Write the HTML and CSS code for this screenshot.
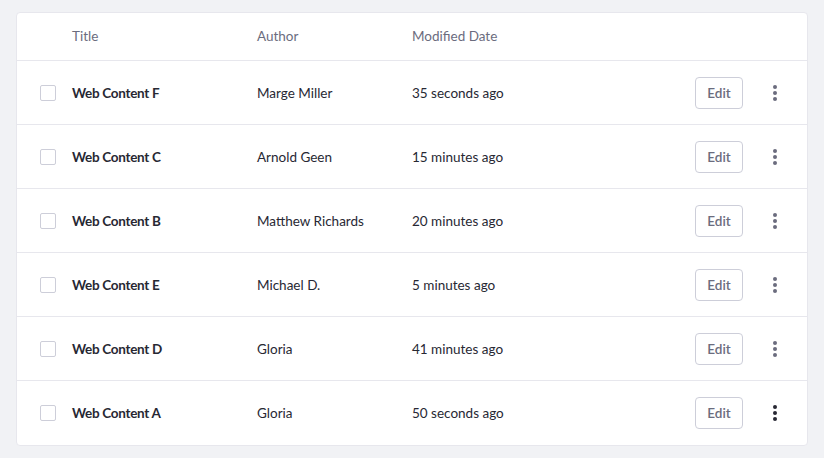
FILE: index.html
```html
<!DOCTYPE html>
<html lang="en">
<head>
<meta charset="utf-8">
<title>Web Content</title>
<link rel="stylesheet" href="styles.css">
</head>
<body>
<div class="card">
  <div class="row head">
    <span></span>
    <span>Title</span>
    <span>Author</span>
    <span>Modified Date</span>
    <span></span>
    <span></span>
  </div>
  <div class="row">
    <span class="check"></span>
    <span class="title">Web Content F</span>
    <span>Marge Miller</span>
    <span>35 seconds ago</span>
    <button class="edit">Edit</button>
    <button class="kebab"><svg width="4" height="16" viewBox="0 0 4 16"><circle cx="2" cy="2" r="2"/><circle cx="2" cy="8" r="2"/><circle cx="2" cy="14" r="2"/></svg></button>
  </div>
  <div class="row">
    <span class="check"></span>
    <span class="title">Web Content C</span>
    <span>Arnold Geen</span>
    <span>15 minutes ago</span>
    <button class="edit">Edit</button>
    <button class="kebab"><svg width="4" height="16" viewBox="0 0 4 16"><circle cx="2" cy="2" r="2"/><circle cx="2" cy="8" r="2"/><circle cx="2" cy="14" r="2"/></svg></button>
  </div>
  <div class="row">
    <span class="check"></span>
    <span class="title">Web Content B</span>
    <span>Matthew Richards</span>
    <span>20 minutes ago</span>
    <button class="edit">Edit</button>
    <button class="kebab"><svg width="4" height="16" viewBox="0 0 4 16"><circle cx="2" cy="2" r="2"/><circle cx="2" cy="8" r="2"/><circle cx="2" cy="14" r="2"/></svg></button>
  </div>
  <div class="row">
    <span class="check"></span>
    <span class="title">Web Content E</span>
    <span>Michael D.</span>
    <span>5 minutes ago</span>
    <button class="edit">Edit</button>
    <button class="kebab"><svg width="4" height="16" viewBox="0 0 4 16"><circle cx="2" cy="2" r="2"/><circle cx="2" cy="8" r="2"/><circle cx="2" cy="14" r="2"/></svg></button>
  </div>
  <div class="row">
    <span class="check"></span>
    <span class="title">Web Content D</span>
    <span>Gloria</span>
    <span>41 minutes ago</span>
    <button class="edit">Edit</button>
    <button class="kebab"><svg width="4" height="16" viewBox="0 0 4 16"><circle cx="2" cy="2" r="2"/><circle cx="2" cy="8" r="2"/><circle cx="2" cy="14" r="2"/></svg></button>
  </div>
  <div class="row">
    <span class="check"></span>
    <span class="title">Web Content A</span>
    <span>Gloria</span>
    <span>50 seconds ago</span>
    <button class="edit">Edit</button>
    <button class="kebab active"><svg width="4" height="16" viewBox="0 0 4 16"><circle cx="2" cy="2" r="2"/><circle cx="2" cy="8" r="2"/><circle cx="2" cy="14" r="2"/></svg></button>
  </div>
</div>
</body>
</html>
```

FILE: styles.css
```css
* { box-sizing: border-box; }
body {
  margin: 0;
  padding: 12px 16px 0 16px;
  background: #f1f2f5;
  font-family: Lato, "Liberation Sans", sans-serif;
  font-size: 13.5px;
  color: #272833;
}
.card {
  width: 792px;
  background: #fff;
  border: 1px solid #e7e7ed;
  border-radius: 4px;
}
.row {
  display: grid;
  grid-template-columns: 16px 169px 139px 1fr 48px 32px;
  column-gap: 16px;
  align-items: center;
  height: 64px;
  padding: 0 16px 0 23px;
  border-bottom: 1px solid #e7e7ed;
}
.row:last-child { border-bottom: none; }
.row.head {
  height: 48px;
  color: #6b6c7e;
  padding-bottom: 1px;
}
.check {
  width: 16px;
  height: 16px;
  border: 1px solid #cdced9;
  border-radius: 2px;
  background: #fff;
}
.title {
  font-weight: 700;
  letter-spacing: -0.3px;
}
.edit {
  width: 48px;
  height: 32px;
  border: 1px solid #cdced9;
  border-radius: 4px;
  background: #fff;
  color: #6b6c7e;
  font-family: inherit;
  font-size: 13.5px;
  font-weight: 600;
  padding: 0;
}
.kebab {
  width: 32px;
  height: 32px;
  border: none;
  background: none;
  padding: 0;
  display: flex;
  align-items: center;
  justify-content: center;
  fill: #6b6c7e;
}
.kebab.active { fill: #272833; }
```
